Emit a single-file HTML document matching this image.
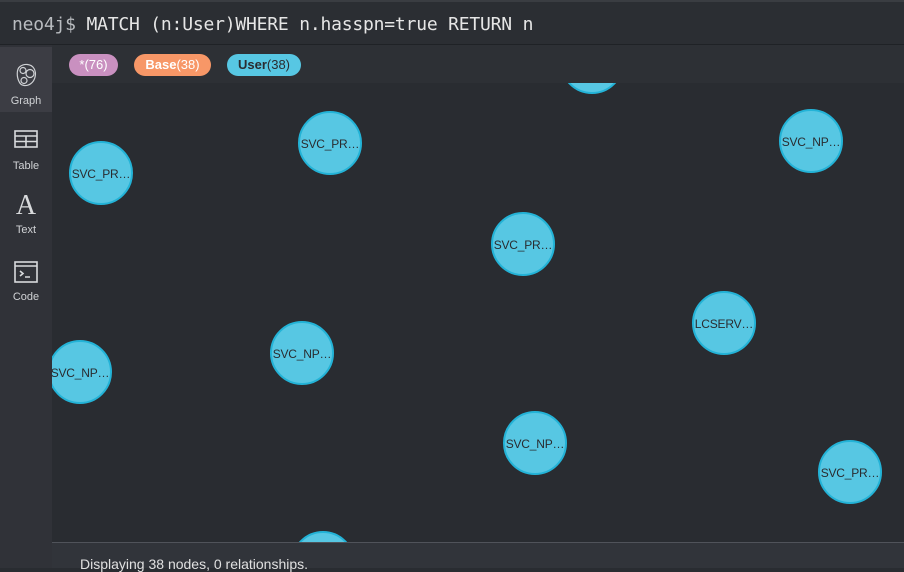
<!DOCTYPE html>
<html><head><meta charset="utf-8"><style>
*{margin:0;padding:0;box-sizing:border-box}
body{width:904px;height:568px;overflow:hidden;background:#292c31;font-family:"Liberation Sans",sans-serif;position:relative}
#top{position:absolute;left:0;top:0;width:904px;height:45px;background:#2b2e33;border-top:2px solid #3a3d42;border-bottom:1px solid #1f2226}
#top span{position:absolute;left:12px;top:12px;font-family:"DejaVu Sans Mono","Liberation Mono",monospace;font-size:18px;color:#e6e6e6;letter-spacing:-0.2px}
#top span b{font-weight:normal;color:#b9bcc0}
#side{position:absolute;left:0;top:45px;width:52px;height:523px;background:#303238}
.sb{position:absolute;left:0;width:52px;text-align:center;color:#d0d2d5;font-size:11px}
.sb svg{display:block;margin:0 auto 6px}
#legend{position:absolute;left:52px;top:45px;width:852px;height:38px;background:#2d3035}
.pill{position:absolute;top:9px;height:22px;border-radius:11px;font-size:13px;line-height:22px;text-align:center}
#graph{position:absolute;left:52px;top:83px;width:852px;height:459px;overflow:hidden}
.n{position:absolute;width:64px;height:64px;border-radius:50%;background:#57c7e3;border:2px solid #23b3d7;color:#2a2c30;font-size:12px;line-height:62px;text-align:center;white-space:nowrap;overflow:hidden;letter-spacing:-0.2px}
#foot{position:absolute;left:52px;top:542px;width:852px;height:26px;background:#31343a;border-top:1px solid #50535a}
#foot span{position:absolute;left:28px;top:13px;color:#e0e0e0;font-size:14px}
</style></head><body>
<div id="top"><span><b>neo4j$</b> MATCH (n:User)WHERE n.hasspn=true RETURN n</span></div>
<div id="side">
 <div class="sb" style="top:2px;height:65px;background:#3c3d44;padding-top:15px">
  <svg width="24" height="27" viewBox="0 0 24 26" fill="none" stroke="#cfd1d4" stroke-width="1.2"><path d="M6 4c4-3 11-3 14 2 3 5 1 12-3 15-4 3-10 3-12-2C3 15 2 7 6 4z"/><circle cx="9" cy="8" r="3"/><circle cx="16" cy="11" r="4"/><circle cx="10" cy="18" r="3"/></svg>Graph</div>
 <div class="sb" style="top:85px">
  <svg width="24" height="18" viewBox="0 0 24 18" fill="none" stroke="#d8dadc" stroke-width="1.6"><rect x="1" y="1" width="22" height="16"/><path d="M1 6h22M1 11.5h22M12 6v11"/></svg><div style="margin-top:12px">Table</div></div>
 <div class="sb" style="top:148px"><div style="font-family:'Liberation Serif',serif;font-size:28px;line-height:26px;margin-bottom:5px;color:#d8dadc">A</div>Text</div>
 <div class="sb" style="top:216px">
  <svg width="24" height="22" viewBox="0 0 24 22" fill="none" stroke="#d8dadc" stroke-width="1.6"><rect x="1" y="1" width="22" height="20"/><path d="M1 5h22M6 10l3 2.5-3 2.5M11 16h5"/></svg><div style="margin-top:8px">Code</div></div>
</div>
<div id="legend">
 <div class="pill" style="left:17px;width:49px;background:#c990c0;color:#fff">*(76)</div>
 <div class="pill" style="left:82px;width:77px;background:#f79767;color:#fff"><b>Base</b>(38)</div>
 <div class="pill" style="left:175px;width:74px;background:#57c7e3;color:#2a2c30"><b>User</b>(38)</div>
</div>
<div id="graph">
 <div class="n" style="left:508px;top:-53px"></div>
 <div class="n" style="left:246px;top:28px">SVC_PR…</div>
 <div class="n" style="left:17px;top:58px">SVC_PR…</div>
 <div class="n" style="left:727px;top:26px">SVC_NP…</div>
 <div class="n" style="left:439px;top:129px">SVC_PR…</div>
 <div class="n" style="left:640px;top:208px">LCSERV…</div>
 <div class="n" style="left:218px;top:238px">SVC_NP…</div>
 <div class="n" style="left:-4px;top:257px">SVC_NP…</div>
 <div class="n" style="left:451px;top:328px">SVC_NP…</div>
 <div class="n" style="left:766px;top:357px">SVC_PR…</div>
 <div class="n" style="left:239px;top:448px"></div>
</div>
<div id="foot"><span>Displaying 38 nodes, 0 relationships.</span></div>
</body></html>
